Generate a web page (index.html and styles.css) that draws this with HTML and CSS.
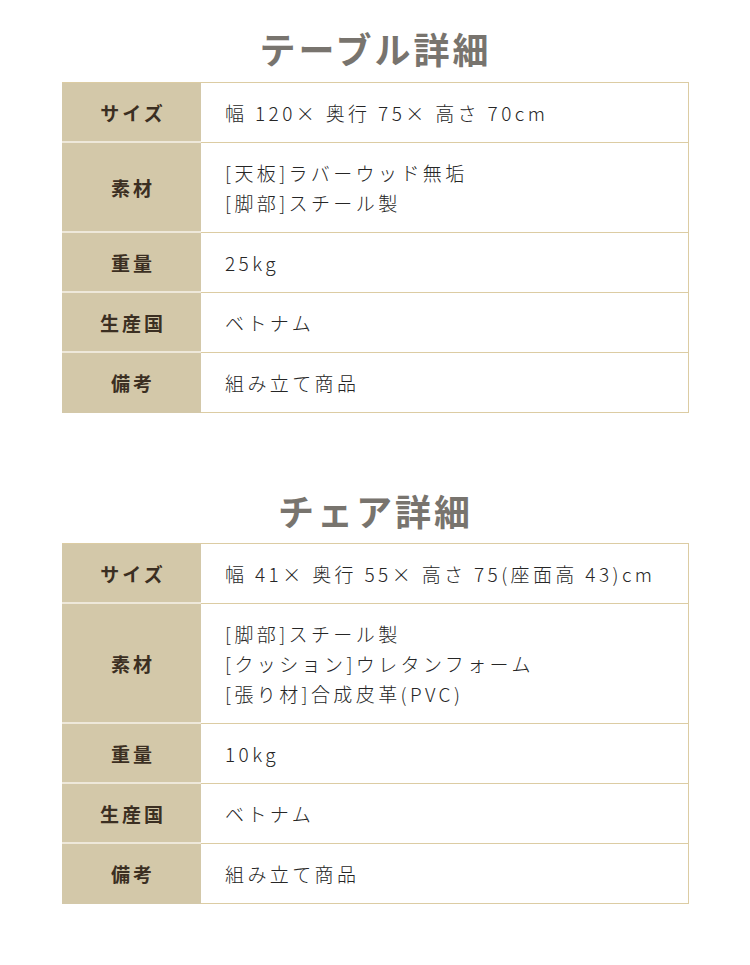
FILE: index.html
```html
<!DOCTYPE html>
<html lang="ja">
<head>
<meta charset="utf-8">
<link rel="stylesheet" href="styles.css">
</head>
<body>
<section class="spec spec-first">
  <h2 class="spec-title">テーブル詳細</h2>
  <div class="spec-table">
    <div class="row"><div class="label">サイズ</div><div class="value">幅 120× 奥行 75× 高さ 70cm</div></div>
    <div class="row"><div class="label">素材</div><div class="value">[天板]ラバーウッド無垢<br>[脚部]スチール製</div></div>
    <div class="row"><div class="label">重量</div><div class="value">25kg</div></div>
    <div class="row"><div class="label">生産国</div><div class="value">ベトナム</div></div>
    <div class="row"><div class="label">備考</div><div class="value">組み立て商品</div></div>
  </div>
</section>
<section class="spec spec-second">
  <h2 class="spec-title">チェア詳細</h2>
  <div class="spec-table">
    <div class="row"><div class="label">サイズ</div><div class="value">幅 41× 奥行 55× 高さ 75(座面高 43)cm</div></div>
    <div class="row"><div class="label">素材</div><div class="value">[脚部]スチール製<br>[クッション]ウレタンフォーム<br>[張り材]合成皮革(PVC)</div></div>
    <div class="row"><div class="label">重量</div><div class="value">10kg</div></div>
    <div class="row"><div class="label">生産国</div><div class="value">ベトナム</div></div>
    <div class="row"><div class="label">備考</div><div class="value">組み立て商品</div></div>
  </div>
</section>
</body>
</html>
```
FILE: styles.css
```css
html, body {
  margin: 0;
  padding: 0;
  background: #ffffff;
}
body {
  font-family: "Noto Sans CJK JP", "Noto Sans", sans-serif;
  width: 750px;
}
.spec {
  padding: 0 61px 0 62px;
}
.spec-first {
  padding-top: 30px;
}
.spec-second {
  padding-top: 79px;
}
.spec-title {
  margin: 0 0 16px;
  text-align: center;
  font-size: 36px;
  line-height: 36px;
  font-weight: 700;
  color: #78746e;
  letter-spacing: 3px;
}
.spec-second .spec-title {
  margin-bottom: 15px;
}
.spec-table {
  border-top: 1px solid #dccca3;
  border-right: 1px solid #dccca3;
}
.row {
  display: grid;
  grid-template-columns: 139px 1fr;
}
.label {
  background: #d3c8a9;
  color: #3b2f22;
  font-weight: 700;
  font-size: 19px;
  letter-spacing: 3px;
  padding-left: 3px;
  display: flex;
  align-items: center;
  justify-content: center;
  border-bottom: 2px solid #eee8da;
}
.row:last-child .label {
  border-bottom: 1px solid #d3c8a9;
}
.value {
  padding: 15px 6px 14px 24px;
  font-size: 19px;
  font-weight: 300;
  line-height: 30px;
  letter-spacing: 3.4px;
  color: #262626;
  white-space: nowrap;
  border-bottom: 1px solid #dccca3;
}
```
